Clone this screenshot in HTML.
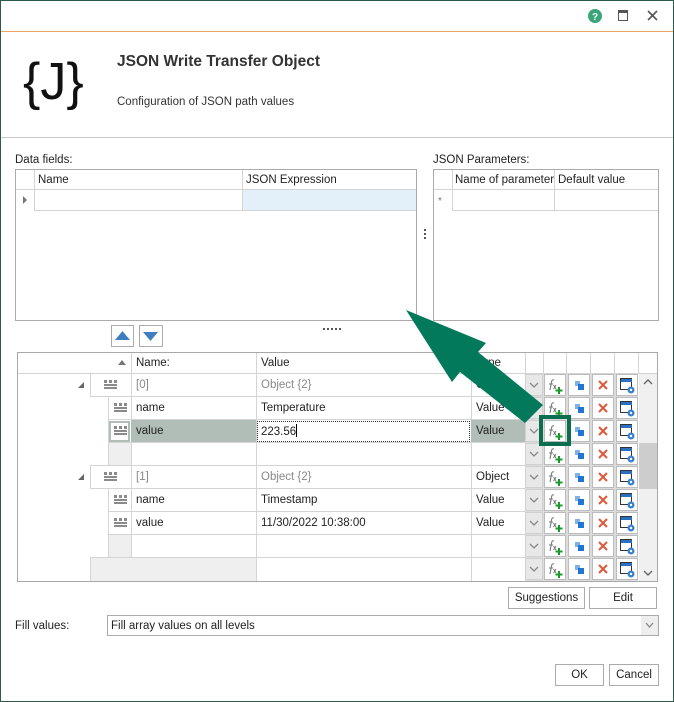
<!DOCTYPE html>
<html><head><meta charset="utf-8"><style>
*{margin:0;padding:0;box-sizing:border-box}
body{width:674px;height:702px;overflow:hidden;background:#fff;font-family:"Liberation Sans",sans-serif;font-size:11.5px;color:#222;position:relative}
.a{position:absolute}
.t{position:absolute;white-space:nowrap;line-height:14px}
.bx{position:absolute;border:1px solid #ababab;background:#fff}
.hl{position:absolute;background:#d4d4d4}
.vl{position:absolute;background:#d4d4d4;width:1px}
.btn{position:absolute;border:1px solid #ababab;background:#fff;text-align:center;line-height:20px}
.g{color:#888}
</style></head><body>
<div class="a" style="left:0;top:0;width:674px;height:702px;border:1px solid #2e5a4b"></div>
<svg class="a" style="left:587px;top:8px" width="16" height="16"><circle cx="8" cy="8" r="7" fill="#3aa57a"/><text x="8" y="12" font-size="10" font-weight="bold" text-anchor="middle" fill="#fff" font-family="Liberation Sans">?</text></svg>
<div class="a" style="left:618px;top:10px;width:10px;height:11px;border:1px solid #555;border-top-width:3px"></div>
<svg class="a" style="left:647px;top:10px" width="11" height="11"><path d="M1 1L10 10M10 1L1 10" stroke="#555" stroke-width="1.6"/></svg>
<div class="a" style="left:1px;top:31px;width:672px;height:1px;background:#e8a86a"></div>
<div class="t" style="left:23px;top:54px;font-size:52px;line-height:56px;color:#111">{J}</div>
<div class="t" style="left:117px;top:55px;font-size:15.5px;font-weight:bold;color:#333">JSON Write Transfer Object</div>
<div class="t" style="left:117px;top:95px;color:#333">Configuration of JSON path values</div>
<div class="a" style="left:1px;top:137px;width:672px;height:1px;background:#c8c8c8"></div>
<div class="t" style="left:15px;top:153px">Data fields:</div>
<div class="bx" style="left:15px;top:169px;width:402px;height:152px"></div>
<div class="hl" style="left:16px;top:189px;width:400px;height:1px"></div>
<div class="vl" style="left:34px;top:170px;height:40px"></div>
<div class="vl" style="left:242px;top:170px;height:40px"></div>
<div class="a" style="left:243px;top:190px;width:173px;height:20px;background:#e3eff9"></div>
<div class="hl" style="left:34px;top:210px;width:382px;height:1px"></div>
<div class="t" style="left:38px;top:173px">Name</div>
<div class="t" style="left:246px;top:173px">JSON Expression</div>
<svg class="a" style="left:23px;top:196px" width="5" height="8"><path d="M0 0L4 4L0 8Z" fill="#777"/></svg>
<div class="a" style="left:424px;top:229px;width:2px;height:12px;background:repeating-linear-gradient(#555 0 2px,transparent 2px 4px)"></div>
<div class="t" style="left:433px;top:153px">JSON Parameters:</div>
<div class="bx" style="left:433px;top:169px;width:226px;height:152px"></div>
<div class="hl" style="left:434px;top:189px;width:224px;height:1px"></div>
<div class="vl" style="left:452px;top:170px;height:40px"></div>
<div class="vl" style="left:554px;top:170px;height:40px"></div>
<div class="hl" style="left:452px;top:210px;width:206px;height:1px"></div>
<div class="t" style="left:455px;top:173px">Name of parameter</div>
<div class="t" style="left:558px;top:173px">Default value</div>
<div class="t" style="left:438px;top:195px;font-size:10px;color:#777">*</div>
<div class="bx" style="left:111px;top:325px;width:23px;height:22px"></div>
<svg class="a" style="left:115px;top:330px" width="15" height="10"><path d="M0 10L7.5 1L15 10Z" fill="#3f7fc1"/></svg>
<div class="bx" style="left:139px;top:325px;width:24px;height:22px"></div>
<svg class="a" style="left:143px;top:332px" width="15" height="10"><path d="M0 0L15 0L7.5 9Z" fill="#3f7fc1"/></svg>
<div class="a" style="left:323px;top:328px;width:18px;height:2px;background:repeating-linear-gradient(90deg,#555 0 2px,transparent 2px 4px)"></div>
<div class="bx" style="left:17px;top:352px;width:641px;height:230px;border-color:#a8a8a8"></div>
<div class="hl" style="left:18px;top:373px;width:639px;height:1px"></div>
<div class="vl" style="left:131px;top:353px;height:228px"></div>
<div class="vl" style="left:256px;top:353px;height:228px"></div>
<div class="vl" style="left:471px;top:353px;height:228px"></div>
<div class="vl" style="left:525px;top:353px;height:20px"></div>
<div class="vl" style="left:543px;top:353px;height:20px"></div>
<div class="vl" style="left:566px;top:353px;height:20px"></div>
<div class="vl" style="left:590px;top:353px;height:20px"></div>
<div class="vl" style="left:614px;top:353px;height:20px"></div>
<div class="vl" style="left:638px;top:353px;height:20px"></div>
<svg class="a" style="left:118px;top:359px" width="8" height="6"><path d="M0 6L4 1L8 6Z" fill="#777"/></svg>
<div class="t" style="left:136px;top:356px">Name:</div>
<div class="t" style="left:261px;top:356px">Value</div>
<div class="t" style="left:476px;top:356px">Type</div>
<div class="a" style="left:108px;top:443px;width:23px;height:23px;background:#efefef"></div>
<div class="a" style="left:108px;top:535px;width:23px;height:23px;background:#efefef"></div>
<div class="a" style="left:90px;top:558px;width:166px;height:23px;background:#efefef"></div>
<div class="a" style="left:131px;top:420px;width:125px;height:23px;background:#b1bdb7"></div>
<div class="a" style="left:471px;top:420px;width:54px;height:23px;background:#b1bdb7"></div>
<div class="a" style="left:109px;top:421px;width:21px;height:21px;background:#fff;border:2px solid #b1bdb7"></div>
<div class="a" style="left:257px;top:421px;width:213px;height:21px;border:1px dotted #333"></div>
<div class="hl" style="left:90px;top:396px;width:435px;height:1px"></div>
<div class="hl" style="left:108px;top:419px;width:417px;height:1px"></div>
<div class="hl" style="left:108px;top:442px;width:417px;height:1px"></div>
<div class="hl" style="left:90px;top:465px;width:435px;height:1px"></div>
<div class="hl" style="left:90px;top:488px;width:435px;height:1px"></div>
<div class="hl" style="left:108px;top:511px;width:417px;height:1px"></div>
<div class="hl" style="left:108px;top:534px;width:417px;height:1px"></div>
<div class="hl" style="left:90px;top:557px;width:435px;height:1px"></div>
<div class="vl" style="left:90px;top:374px;height:23px"></div>
<div class="vl" style="left:108px;top:397px;height:69px"></div>
<div class="vl" style="left:90px;top:466px;height:23px"></div>
<div class="vl" style="left:108px;top:489px;height:69px"></div>
<div class="vl" style="left:90px;top:558px;height:23px"></div>
<svg class="a" style="left:78px;top:382px" width="6" height="6"><path d="M6 0L6 6L0 6Z" fill="#666"/></svg>
<svg class="a" style="left:78px;top:474px" width="6" height="6"><path d="M6 0L6 6L0 6Z" fill="#666"/></svg>
<svg class="a" style="left:104px;top:380px" width="13" height="10"><g fill="#8a8a8a"><rect x="0" y="0" width="3" height="3"/><rect x="5" y="0" width="3" height="3"/><rect x="10" y="0" width="3" height="3"/><rect x="0" y="4" width="13" height="2"/><rect x="0" y="7" width="13" height="2"/></g></svg>
<svg class="a" style="left:104px;top:472px" width="13" height="10"><g fill="#8a8a8a"><rect x="0" y="0" width="3" height="3"/><rect x="5" y="0" width="3" height="3"/><rect x="10" y="0" width="3" height="3"/><rect x="0" y="4" width="13" height="2"/><rect x="0" y="7" width="13" height="2"/></g></svg>
<svg class="a" style="left:114px;top:403px" width="13" height="10"><g fill="#8a8a8a"><rect x="0" y="0" width="3" height="3"/><rect x="5" y="0" width="3" height="3"/><rect x="10" y="0" width="3" height="3"/><rect x="0" y="4" width="13" height="2"/><rect x="0" y="7" width="13" height="2"/></g></svg>
<svg class="a" style="left:114px;top:426px" width="13" height="10"><g fill="#8a8a8a"><rect x="0" y="0" width="3" height="3"/><rect x="5" y="0" width="3" height="3"/><rect x="10" y="0" width="3" height="3"/><rect x="0" y="4" width="13" height="2"/><rect x="0" y="7" width="13" height="2"/></g></svg>
<svg class="a" style="left:114px;top:495px" width="13" height="10"><g fill="#8a8a8a"><rect x="0" y="0" width="3" height="3"/><rect x="5" y="0" width="3" height="3"/><rect x="10" y="0" width="3" height="3"/><rect x="0" y="4" width="13" height="2"/><rect x="0" y="7" width="13" height="2"/></g></svg>
<svg class="a" style="left:114px;top:518px" width="13" height="10"><g fill="#8a8a8a"><rect x="0" y="0" width="3" height="3"/><rect x="5" y="0" width="3" height="3"/><rect x="10" y="0" width="3" height="3"/><rect x="0" y="4" width="13" height="2"/><rect x="0" y="7" width="13" height="2"/></g></svg>
<div class="t g" style="left:136px;top:378px">[0]</div>
<div class="t g" style="left:261px;top:378px">Object {2}</div>
<div class="t" style="left:476px;top:378px">Object</div>
<div class="t" style="left:136px;top:401px">name</div>
<div class="t" style="left:261px;top:401px">Temperature</div>
<div class="t" style="left:476px;top:401px">Value</div>
<div class="t" style="left:136px;top:424px">value</div>
<div class="t" style="left:261px;top:424px">223.56<span style="display:inline-block;width:1px;height:13px;background:#000;vertical-align:-2px"></span></div>
<div class="t" style="left:476px;top:424px">Value</div>
<div class="t g" style="left:136px;top:470px">[1]</div>
<div class="t g" style="left:261px;top:470px">Object {2}</div>
<div class="t" style="left:476px;top:470px">Object</div>
<div class="t" style="left:136px;top:493px">name</div>
<div class="t" style="left:261px;top:493px">Timestamp</div>
<div class="t" style="left:476px;top:493px">Value</div>
<div class="t" style="left:136px;top:516px">value</div>
<div class="t" style="left:261px;top:516px">11/30/2022 10:38:00</div>
<div class="t" style="left:476px;top:516px">Value</div>
<div class="a" style="left:525px;top:374px;width:113px;height:207px;background:#dcdcdc"></div>
<svg class="a" style="left:525px;top:374px" width="113" height="207">
<defs>
<g id="r">
<rect x="0.5" y="0.5" width="17" height="21" fill="#e8e8e8" stroke="#d0d0d0"/>
<path d="M5 9L9 13L13 9" stroke="#888" stroke-width="1.3" fill="none"/>
<rect x="19.5" y="0.5" width="21" height="21" fill="#fff" stroke="#bcbcbc"/>
<rect x="43.5" y="0.5" width="21" height="21" fill="#fff" stroke="#bcbcbc"/>
<rect x="67.5" y="0.5" width="21" height="21" fill="#fff" stroke="#bcbcbc"/>
<rect x="91.5" y="0.5" width="21" height="21" fill="#fff" stroke="#bcbcbc"/>
<path d="M29 6Q27 5 26.5 8L25 16M24 10L28 10" stroke="#777" stroke-width="1.1" fill="none"/>
<path d="M28.5 11L31 15M31 11L28.5 15" stroke="#777" stroke-width="1"/>
<path d="M34 13V20M30.5 16.5H37.5" stroke="#1a9a2c" stroke-width="2"/>
<rect x="50" y="7" width="5" height="5" fill="#7fb2e5"/>
<rect x="53" y="10" width="6" height="6" fill="#1f77d3"/>
<path d="M74 7L82 15M82 7L74 15" stroke="#e0583a" stroke-width="2"/>
<rect x="95.5" y="4.5" width="11" height="11" fill="none" stroke="#333"/>
<rect x="96" y="5" width="11" height="3" fill="#2a6fc0"/>
<circle cx="106" cy="16" r="3.5" fill="#3a82d0"/>
<circle cx="106" cy="16" r="1.2" fill="#fff"/>
</g></defs>
<use href="#r" y="0"/><use href="#r" y="23"/><use href="#r" y="46"/><use href="#r" y="69"/><use href="#r" y="92"/><use href="#r" y="115"/><use href="#r" y="138"/><use href="#r" y="161"/><use href="#r" y="184"/>
</svg>
<div class="a" style="left:639px;top:374px;width:18px;height:207px;background:#f0f0f0"></div>
<div class="a" style="left:639px;top:443px;width:18px;height:46px;background:#cdcdcd"></div>
<svg class="a" style="left:643px;top:379px" width="10" height="6"><path d="M1 5L5 1L9 5" stroke="#666" stroke-width="1.4" fill="none"/></svg>
<svg class="a" style="left:643px;top:570px" width="10" height="6"><path d="M1 1L5 5L9 1" stroke="#666" stroke-width="1.4" fill="none"/></svg>
<div class="a" style="left:539px;top:415px;width:32px;height:31px;border:4px solid #0b6e4f"></div>
<svg class="a" style="left:0;top:0" width="674" height="702"><path d="M406 310L486 343L478 352L543 405L525 423L460 372L452 382Z" fill="#02795a"/></svg>
<div class="btn" style="left:508px;top:587px;width:77px;height:22px">Suggestions</div>
<div class="btn" style="left:589px;top:587px;width:68px;height:22px">Edit</div>
<div class="t" style="left:15px;top:619px">Fill values:</div>
<div class="bx" style="left:107px;top:615px;width:552px;height:21px"></div>
<div class="t" style="left:111px;top:619px">Fill array values on all levels</div>
<div class="a" style="left:641px;top:616px;width:17px;height:19px;background:#eee"></div>
<svg class="a" style="left:645px;top:622px" width="9" height="6"><path d="M1 1L4.5 5L8 1" stroke="#888" stroke-width="1.3" fill="none"/></svg>
<div class="btn" style="left:555px;top:664px;width:49px;height:22px">OK</div>
<div class="btn" style="left:609px;top:664px;width:50px;height:22px">Cancel</div>
</body></html>
